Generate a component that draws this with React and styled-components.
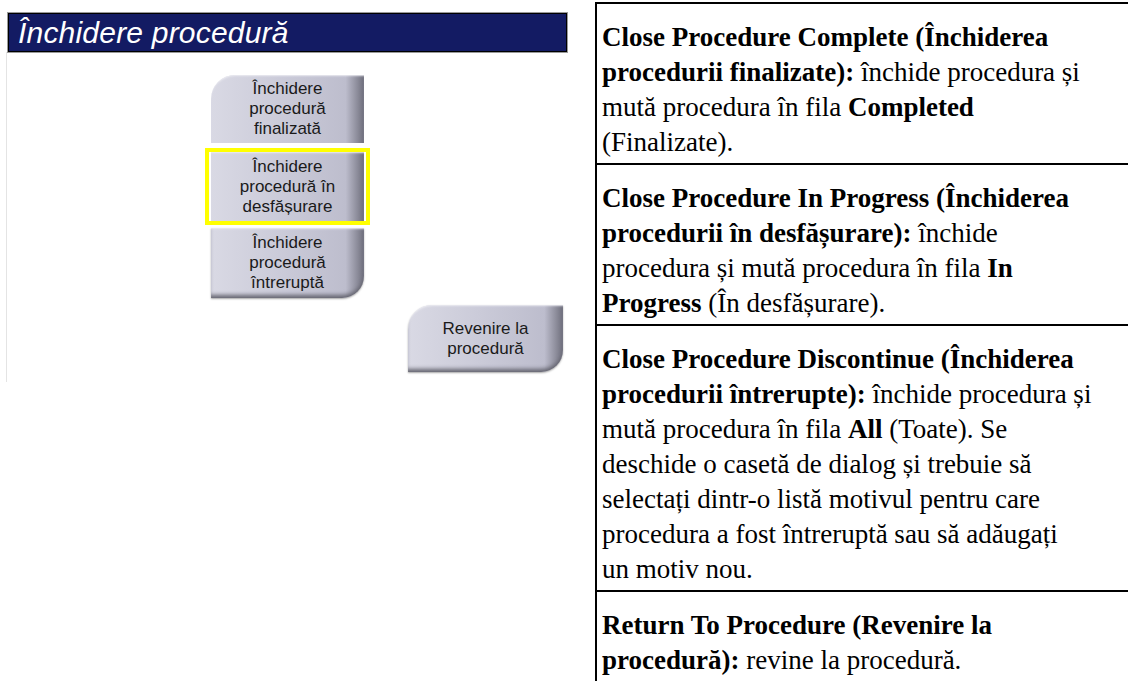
import React from 'react'
import styled, { createGlobalStyle, css } from 'styled-components'

const GlobalStyle = createGlobalStyle`
  html, body {
    margin: 0;
    padding: 0;
    background: #fff;
  }
`

const Page = styled.div`
  width: 1128px;
  height: 681px;
  display: flex;
  overflow: hidden;
  background: #fff;
`

const LeftPane = styled.div`
  width: 595px;
  flex: none;
  padding: 13px 0 0 6px;
  box-sizing: border-box;
`

const TitleBar = styled.div`
  width: 559px;
  height: 39px;
  margin-left: 2px;
  box-sizing: border-box;
  background: #131b63;
  border: 1px solid #000;
  outline: 1px solid #9a9a9a;
  display: flex;
  align-items: center;
  padding-left: 9px;
  font-family: "Liberation Sans", Arial, sans-serif;
  font-style: italic;
  font-size: 30px;
  color: #fff;
  letter-spacing: 0.2px;
`

const Body = styled.div`
  height: 330px;
  border-left: 1px solid #e4e4e4;
  display: flex;
  align-items: flex-start;
  padding: 23px 0 0 198px;
  box-sizing: border-box;
`

const Stack = styled.div`
  width: 165px;
  display: flex;
  flex-direction: column;
  align-items: center;
`

const Highlight = styled.div`
  border: 4px solid #ffff00;
  padding: 0 2px;
  margin: 5px 0 3px;
`

const Button = styled.div`
  width: 153px;
  height: ${p => p.$h || 68}px;
  box-sizing: border-box;
  display: flex;
  align-items: center;
  justify-content: center;
  text-align: center;
  font-family: "Liberation Sans", Arial, sans-serif;
  font-size: 17px;
  line-height: 20px;
  color: #1a1a1a;
  background: linear-gradient(to right, #d9d9e4 0%, #cbcbd9 45%, #bdbdcd 88%, #8a8a98 96%, #6e6e7c 100%);
  box-shadow: inset 0 2px 2px -1px #ececf2;
  ${p => p.$topLeft && css`
    border-top-left-radius: 24px;
  `}
  ${p => p.$bottomRight && css`
    border-bottom-right-radius: 22px;
    box-shadow: inset 0 2px 2px -1px #ececf2, inset 0 -5px 4px -2px #64646f, 0 1px 2px rgba(0, 0, 0, 0.35);
  `}
`

const ReturnButton = styled(Button)`
  margin: 230px 0 0 38px;
  width: 155px;
`

const Table = styled.div`
  flex: 1;
  margin-top: 2px;
  border-left: 2px solid #000;
  border-top: 2px solid #000;
  font-family: "Liberation Serif", "Times New Roman", serif;
  font-size: 27px;
  line-height: 35px;
  color: #000;
`

const Row = styled.div`
  padding: 16px 0 3px 5px;
  border-bottom: ${p => (p.$last ? 'none' : '2px solid #000')};
  white-space: nowrap;
  b {
    font-weight: bold;
  }
`

export default function App() {
  return (
    <Page>
      <GlobalStyle />
      <LeftPane>
        <TitleBar>Închidere procedură</TitleBar>
        <Body>
          <Stack>
            <Button $topLeft $h={68}>Închidere<br />procedură<br />finalizată</Button>
            <Highlight>
              <Button $h={69}>Închidere<br />procedură în<br />desfășurare</Button>
            </Highlight>
            <Button $bottomRight $h={70}>Închidere<br />procedură<br />întreruptă</Button>
          </Stack>
          <ReturnButton $topLeft $bottomRight $h={67}>Revenire la<br />procedură</ReturnButton>
        </Body>
      </LeftPane>
      <Table>
        <Row>
          <b>Close Procedure Complete (Închiderea</b><br />
          <b>procedurii finalizate):</b> închide procedura și<br />
          mută procedura în fila <b>Completed</b><br />
          (Finalizate).
        </Row>
        <Row>
          <b>Close Procedure In Progress (Închiderea</b><br />
          <b>procedurii în desfășurare):</b> închide<br />
          procedura și mută procedura în fila <b>In</b><br />
          <b>Progress</b> (În desfășurare).
        </Row>
        <Row>
          <b>Close Procedure Discontinue (Închiderea</b><br />
          <b>procedurii întrerupte):</b> închide procedura și<br />
          mută procedura în fila <b>All</b> (Toate). Se<br />
          deschide o casetă de dialog și trebuie să<br />
          selectați dintr-o listă motivul pentru care<br />
          procedura a fost întreruptă sau să adăugați<br />
          un motiv nou.
        </Row>
        <Row $last>
          <b>Return To Procedure (Revenire la</b><br />
          <b>procedură):</b> revine la procedură.
        </Row>
      </Table>
    </Page>
  )
}
